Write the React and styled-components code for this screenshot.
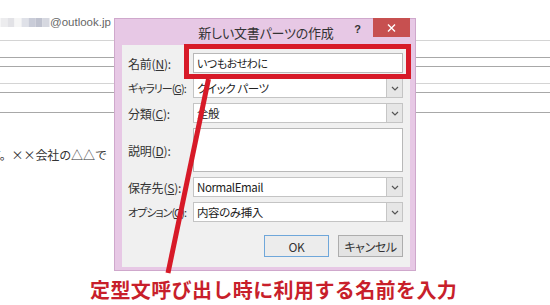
import React from 'react'
import styled, { createGlobalStyle } from 'styled-components'

const GlobalStyle = createGlobalStyle`
  html, body {
    margin: 0;
    padding: 0;
    background: #fff;
  }
  body {
    font-family: "Noto Sans CJK JP", "Noto Sans", sans-serif;
  }
`

const RED = '#d71a28'

const Page = styled.div`
  position: relative;
  width: 550px;
  height: 305px;
  overflow: hidden;
  background: #fff;
  display: flex;
  flex-direction: column;
`

const MailWindow = styled.div`
  height: 278px;
  flex-shrink: 0;
  display: flex;
  flex-direction: column;
`

const Sender = styled.div`
  height: 40px;
  box-sizing: border-box;
  padding-top: 4px;
  display: flex;
  align-items: center;
  font-family: "Liberation Sans", sans-serif;
  font-size: 11.5px;
  color: #666;
`

const Rule = styled.div`
  height: 1px;
  margin-top: ${p => p.$space}px;
  background: ${p => (p.$light ? '#d4d4d4' : '#a8a8a8')};
`

const BodyText = styled.p`
  margin: 34px 0 0 -11px;
  font-size: 12px;
  line-height: 16px;
  letter-spacing: -0.1px;
  color: #333;
  white-space: nowrap;
`

const Dialog = styled.div`
  position: absolute;
  left: 114px;
  top: 18px;
  width: 302px;
  height: 253px;
  box-sizing: border-box;
  border: 1px solid #cfa8cc;
  background: #e7c8e5;
  padding: 0 5px 3px 7px;
  display: flex;
  flex-direction: column;
`

const TitleBar = styled.div`
  height: 26px;
  flex-shrink: 0;
  display: grid;
  grid-template-columns: 60px 1fr 60px;
  align-items: start;
`

const Title = styled.div`
  grid-column: 2;
  text-align: center;
  font-size: 13px;
  line-height: 28px;
  letter-spacing: -0.2px;
  color: #333;
  white-space: nowrap;
  font-feature-settings: "palt";
`

const Controls = styled.div`
  display: flex;
  justify-content: flex-end;
  align-items: flex-start;
  gap: 12px;
`

const Help = styled.span`
  margin-top: 3px;
  font-family: "Liberation Sans", sans-serif;
  font-weight: bold;
  font-size: 11px;
  line-height: 14px;
  color: #333;
`

const CloseButton = styled.div`
  width: 37px;
  height: 19px;
  margin-top: -1px;
  background: #c75050;
  display: flex;
  align-items: center;
  justify-content: center;
`

const Client = styled.div`
  flex: 1;
  background: #f0f0f0;
  padding: 8px 7px 10px 6px;
  display: flex;
  flex-direction: column;
`

const Form = styled.div`
  display: grid;
  grid-template-columns: 65px 210px;
  grid-template-rows: 20px 20px 20px 44px 20px 20px;
  row-gap: 5px;
  align-items: center;
`

const Label = styled.label`
  font-size: ${p => (p.$tight ? 11 : 12)}px;
  letter-spacing: ${p => (p.$tight ? -1 : -0.2)}px;
  color: #333;
  white-space: nowrap;
  font-feature-settings: "palt";
`

const TextBox = styled.div`
  height: ${p => (p.$tall ? 44 : 20)}px;
  box-sizing: border-box;
  border: 1px solid #b8b8b8;
  background: #fff;
  padding: 0 3px;
  font-size: 11px;
  line-height: 18px;
  letter-spacing: -0.5px;
  color: #222;
  font-feature-settings: "palt";
`

const Combo = styled.div`
  height: 20px;
  box-sizing: border-box;
  border: 1px solid #c4c4c4;
  background: #fff;
  display: flex;
`

const ComboValue = styled.span`
  flex: 1;
  padding-left: 3px;
  font-size: 11.5px;
  line-height: 18px;
  letter-spacing: -0.4px;
  color: #222;
  white-space: nowrap;
  font-feature-settings: "palt";
`

const ComboArrow = styled.span`
  width: 15px;
  background: #e6e6e6;
  border-left: 1px solid #c6c6c6;
  display: flex;
  align-items: center;
  justify-content: center;
`

const ButtonRow = styled.div`
  margin-top: 13px;
  display: flex;
  justify-content: flex-end;
  gap: 9px;
`

const Button = styled.button`
  width: 65px;
  height: 22px;
  box-sizing: border-box;
  padding: 0;
  border: 1px solid ${p => (p.$default ? '#6fa7da' : '#adadad')};
  background: ${p => (p.$default ? '#ececec' : '#e3e3e3')};
  font-family: inherit;
  font-size: 12px;
  letter-spacing: -0.4px;
  color: #333;
  font-feature-settings: "palt";
`

const Highlight = styled.div`
  position: absolute;
  left: 184px;
  top: 44px;
  width: 227px;
  height: 35px;
  box-sizing: border-box;
  border: 5px solid ${RED};
`

const Pointer = styled.svg`
  position: absolute;
  left: 0;
  top: 0;
  pointer-events: none;
`

const Caption = styled.div`
  padding-left: 90px;
  font-size: 20px;
  font-weight: bold;
  line-height: 24px;
  letter-spacing: 0.4px;
  color: #c81f2b;
  white-space: nowrap;
`

const mosaic = ['#ececee', '#e2e2e6', '#f6f6f6', '#dfe1e8', '#c9ccd8', '#bfc2cf', '#d6d8e0']

const Chevron = () => (
  <svg width="8" height="5" viewBox="0 0 8 5">
    <path d="M1 1 L4 4 L7 1" fill="none" stroke="#555" strokeWidth="1.2" />
  </svg>
)

const fields = [
  { label: '名前', key: 'N', value: 'いつもおせわに', kind: 'text' },
  { label: 'ギャラリー', key: 'G', value: 'クイック パーツ', kind: 'combo', tight: true },
  { label: '分類', key: 'C', value: '全般', kind: 'combo' },
  { label: '説明', key: 'D', value: '', kind: 'area' },
  { label: '保存先', key: 'S', value: 'NormalEmail', kind: 'combo' },
  { label: 'オプション', key: 'O', value: '内容のみ挿入', kind: 'combo', tight: true },
]

export default function App() {
  return (
    <Page>
      <GlobalStyle />
      <MailWindow>
        <Sender>
          <svg width="50" height="9" viewBox="0 0 49 9">
            {mosaic.map((c, i) => (
              <rect key={i} x={i * 7} y="0" width="7" height="9" fill={c} />
            ))}
          </svg>
          @outlook.jp
        </Sender>
        <Rule $space={0} $light />
        <Rule $space={16} />
        <Rule $space={8} />
        <Rule $space={16} $light />
        <Rule $space={8} />
        <Rule $space={19} />
        <BodyText>す。××会社の△△で</BodyText>
      </MailWindow>
      <Caption>定型文呼び出し時に利用する名前を入力</Caption>

      <Dialog>
        <TitleBar>
          <Title>新しい文書パーツの作成</Title>
          <Controls>
            <Help>?</Help>
            <CloseButton>
              <svg width="9" height="8" viewBox="0 0 9 8">
                <path d="M1 0.5 L8 7.5 M8 0.5 L1 7.5" stroke="#fff" strokeWidth="1.4" />
              </svg>
            </CloseButton>
          </Controls>
        </TitleBar>
        <Client>
          <Form>
            {fields.map(f => (
              <React.Fragment key={f.key}>
                <Label $tight={f.tight}>
                  {f.label}(<u>{f.key}</u>):
                </Label>
                {f.kind === 'combo' ? (
                  <Combo>
                    <ComboValue>{f.value}</ComboValue>
                    <ComboArrow>
                      <Chevron />
                    </ComboArrow>
                  </Combo>
                ) : (
                  <TextBox $tall={f.kind === 'area'}>{f.value}</TextBox>
                )}
              </React.Fragment>
            ))}
          </Form>
          <ButtonRow>
            <Button $default>OK</Button>
            <Button>キャンセル</Button>
          </ButtonRow>
        </Client>
      </Dialog>

      <Highlight />
      <Pointer width="550" height="305" viewBox="0 0 550 305">
        <line x1="208.5" y1="79" x2="168" y2="273" stroke={RED} strokeWidth="5" />
      </Pointer>
    </Page>
  )
}
